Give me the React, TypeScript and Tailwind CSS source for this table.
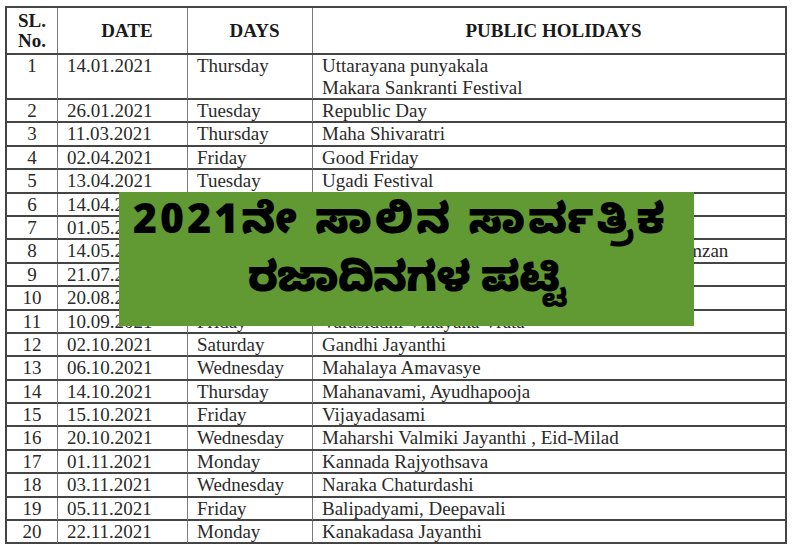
import React from "react";

type Row = { no: string; date: string; day: string; holiday: string[] };

const rows: Row[] = [
  { no: "1", date: "14.01.2021", day: "Thursday", holiday: ["Uttarayana punyakala", "Makara Sankranti Festival"] },
  { no: "2", date: "26.01.2021", day: "Tuesday", holiday: ["Republic Day"] },
  { no: "3", date: "11.03.2021", day: "Thursday", holiday: ["Maha Shivaratri"] },
  { no: "4", date: "02.04.2021", day: "Friday", holiday: ["Good Friday"] },
  { no: "5", date: "13.04.2021", day: "Tuesday", holiday: ["Ugadi Festival"] },
  { no: "6", date: "14.04.2021", day: "Wednesday", holiday: ["Dr. B.R. Ambedkar Jayanthi"] },
  { no: "7", date: "01.05.2021", day: "Saturday", holiday: ["May Day"] },
  { no: "8", date: "14.05.2021", day: "Friday", holiday: ["Basava Jayanthi, Akshaya Tritiya, Khutub-E-Ramzan"] },
  { no: "9", date: "21.07.2021", day: "Wednesday", holiday: ["Bakrid"] },
  { no: "10", date: "20.08.2021", day: "Friday", holiday: ["Last day of Moharam"] },
  { no: "11", date: "10.09.2021", day: "Friday", holiday: ["Varasiddhi Vinayaka Vrata"] },
  { no: "12", date: "02.10.2021", day: "Saturday", holiday: ["Gandhi Jayanthi"] },
  { no: "13", date: "06.10.2021", day: "Wednesday", holiday: ["Mahalaya Amavasye"] },
  { no: "14", date: "14.10.2021", day: "Thursday", holiday: ["Mahanavami, Ayudhapooja"] },
  { no: "15", date: "15.10.2021", day: "Friday", holiday: ["Vijayadasami"] },
  { no: "16", date: "20.10.2021", day: "Wednesday", holiday: ["Maharshi Valmiki Jayanthi , Eid-Milad"] },
  { no: "17", date: "01.11.2021", day: "Monday", holiday: ["Kannada Rajyothsava"] },
  { no: "18", date: "03.11.2021", day: "Wednesday", holiday: ["Naraka Chaturdashi"] },
  { no: "19", date: "05.11.2021", day: "Friday", holiday: ["Balipadyami, Deepavali"] },
  { no: "20", date: "22.11.2021", day: "Monday", holiday: ["Kanakadasa Jayanthi"] },
];

const cols = "grid grid-cols-[50px_130px_125px_1fr]";
const cell = "border-l border-[#7a7a7a] pl-[9px]";

const App = () => {
  return (
    <div className="w-[800px] h-[551px] bg-white overflow-hidden pt-[6px] pl-[5px] text-[19px] leading-[22px] text-[#2a2a2a] [font-family:'Liberation_Serif',serif]">
      <div className="relative w-[782px]">
        <div className="border-2 border-[#454545]">
          {/* header */}
          <div className={`${cols} h-[45px] font-bold text-[#1a1a1a]`}>
            <div className="flex flex-col items-center justify-center leading-[20px]">
              <span>SL.</span>
              <span>No.</span>
            </div>
            <div className={`${cell} flex items-center justify-center pl-0`}>DATE</div>
            <div className={`${cell} flex items-center justify-center pl-0`}>DAYS</div>
            <div className={`${cell} flex items-center justify-center pl-0`}>PUBLIC HOLIDAYS</div>
          </div>
          {rows.map((r) => (
            <div
              key={r.no}
              className={`${cols} border-t-2 border-[#454545] ${r.holiday.length > 1 ? "h-[45px]" : "h-[23.4px]"}`}
            >
              <div className="text-center">{r.no}</div>
              <div className={cell}>{r.date}</div>
              <div className={cell}>{r.day}</div>
              <div className={`${cell} whitespace-nowrap`}>
                {r.holiday.map((h) => (
                  <div key={h}>{h}</div>
                ))}
              </div>
            </div>
          ))}
        </div>

        {/* green title banner laid over the table */}
        <div className="absolute left-[114px] top-[186px] w-[575px] h-[134px] pb-[4px] bg-[#619a33] flex flex-col items-center justify-center text-black font-black text-[42px] leading-[58px] [font-family:'Noto_Sans_Kannada','Noto_Sans','DejaVu_Sans',sans-serif]">
          <div className="tracking-[3px] -ml-[12px]">2021ನೇ ಸಾಲಿನ ಸಾರ್ವತ್ರಿಕ</div>
          <div className="tracking-[-1px]">ರಜಾದಿನಗಳ ಪಟ್ಟಿ</div>
        </div>
      </div>
    </div>
  );
};

export default App;
